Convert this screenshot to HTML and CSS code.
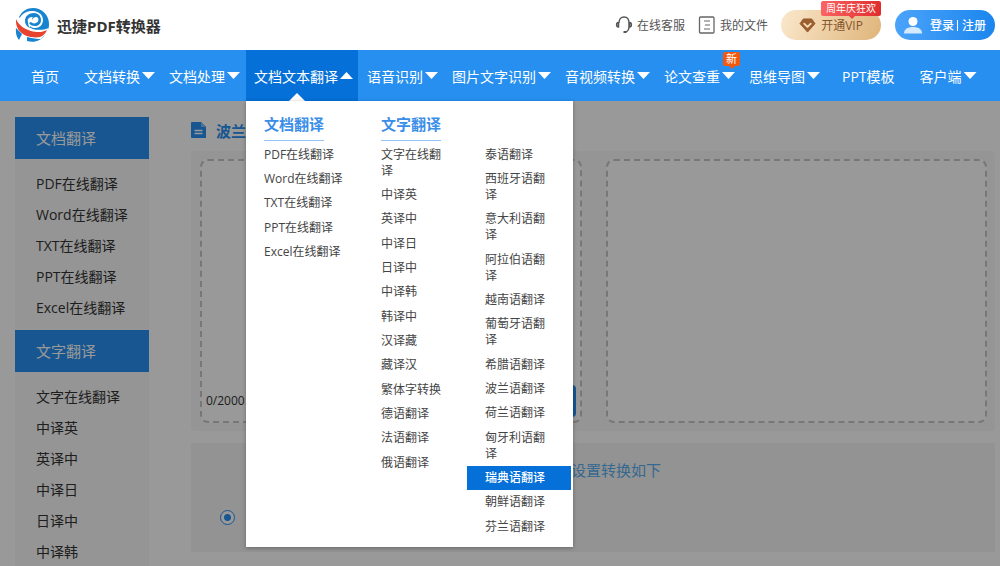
FILE: index.html
```html
<!DOCTYPE html>
<html lang="zh-CN">
<head>
<meta charset="utf-8">
<title>迅捷PDF转换器</title>
<link rel="stylesheet" href="styles.css">
</head>
<body>
<div class="app">
  <header class="topbar">
    <a class="brand" href="#">
      <svg class="brand-logo" viewBox="0 0 34 34" aria-hidden="true">
        <path fill="#1784cf" d="M4 9C7 3 12 0 18 0c9 0 16 7 16 16 0 3-.5 5-1.500 7C26 26 10 20 4 9z"/>
        <path fill="#1784cf" d="M1 20l6 6-3 6C1.500 29 .5 25 1 20zM12 29c6 1.500 13 .5 18-2-4 6-11 8-18 6z"/>
        <path fill="#fff" d="M4 11C7 5 13 2.500 18 3c6 .5 10 4 10 9s-3.500 8-8 8c-2 0-4-.5-5-2l-1 5C9 21 6 17 4 11z"/>
        <path fill="#1784cf" d="M10 13c0-5 4-8 9-8 4 0 7 3 7 7s-3 6-6 6-5-1-6-3l2-1c1 1 3 2 5 1-4-1-5-4-3-6-4 0-6 2-5 5 0 3 1 5 2 6-3-1-5-4-5-7z"/>
        <path fill="#fff" d="M17 12c1-3 5-4 6-2s0 5-3 5c-2 0-3-1-3-3z"/>
        <path fill="#fff" d="M2 9c3 7 9 10 15 12 6 1.500 12 1 17-1l-2 5-6 6C14 31 2 26 0 12z"/>
        <path fill="#e8432f" d="M1 11c3 7 9 10 15 12 7 2 12 1 16-1-1 3-4 6-7 7C14 31 0 26 1 11z"/>
      </svg>
      <span>迅捷PDF转换器</span>
    </a>
    <div class="tools">
      <a class="tool" href="#">
        <svg class="tool-icon" viewBox="0 0 18 18" fill="none" stroke="#555" aria-hidden="true">
          <path stroke-width="1.300" d="M4 7C4 3 6 1 9 1s5 2 5 6v4c0 3-1 4-3 5"/>
          <path stroke-width="1.500" d="M3.500 6.500C1 6.500 1 11 3.500 11zM14.500 6.500c2.500 0 2.500 4.500 0 4.500z"/>
          <path stroke-width="2" d="M8.500 16h3"/>
        </svg>
        <span>在线客服</span>
      </a>
      <a class="tool" href="#">
        <svg class="tool-icon" viewBox="0 0 18 18" fill="none" stroke="#666" aria-hidden="true">
          <rect x="1.500" y="1" width="14.500" height="16" rx="1" stroke-width="1.300"/>
          <path stroke-width="1.200" d="M6 5h6M7 9h5M6 13h6"/>
        </svg>
        <span>我的文件</span>
      </a>
      <button class="pill vip" type="button">
        <svg class="vip-icon" viewBox="0 0 18 16" aria-hidden="true">
          <path fill="#9a5e30" stroke="#9a5e30" stroke-linejoin="round" d="M4.500 1h9L17 6l-8 9-8-9z"/>
          <path fill="none" stroke="#f3dcb6" stroke-width="2" stroke-linecap="round" stroke-linejoin="round" d="M5.500 6L9 9.500 12.500 6"/>
        </svg>
        <span>开通VIP</span>
        <span class="vip-tag">周年庆狂欢</span>
      </button>
      <button class="pill login" type="button">
        <svg class="login-icon" viewBox="0 0 18 17" aria-hidden="true">
          <circle cx="9" cy="4.500" r="4.500" fill="#fff"/>
          <path fill="#d6eaff" d="M0 16.500C0 12 4 10 9 10s9 2 9 6.500z"/>
        </svg>
        <span>登录</span><span class="login-divider"></span><span>注册</span>
      </button>
    </div>
  </header>

  <nav class="nav">
    <ul class="nav-list">
      <li class="nav-item plain"><a href="#">首页</a></li>
      <li class="nav-item"><a href="#">文档转换<i class="caret"></i></a></li>
      <li class="nav-item"><a href="#">文档处理<i class="caret"></i></a></li>
      <li class="nav-item active">
        <a href="#">文档文本翻译<i class="caret up"></i></a>
        <div class="menu">
          <section class="menu-col wide">
            <h3>文档翻译</h3>
            <ul>
              <li><a href="#">PDF在线翻译</a></li>
              <li><a href="#">Word在线翻译</a></li>
              <li><a href="#">TXT在线翻译</a></li>
              <li><a href="#">PPT在线翻译</a></li>
              <li><a href="#">Excel在线翻译</a></li>
            </ul>
          </section>
          <section class="menu-col">
            <h3>文字翻译</h3>
            <ul>
              <li><a href="#">文字在线翻译</a></li>
              <li><a href="#">中译英</a></li>
              <li><a href="#">英译中</a></li>
              <li><a href="#">中译日</a></li>
              <li><a href="#">日译中</a></li>
              <li><a href="#">中译韩</a></li>
              <li><a href="#">韩译中</a></li>
              <li><a href="#">汉译藏</a></li>
              <li><a href="#">藏译汉</a></li>
              <li><a href="#">繁体字转换</a></li>
              <li><a href="#">德语翻译</a></li>
              <li><a href="#">法语翻译</a></li>
              <li><a href="#">俄语翻译</a></li>
            </ul>
          </section>
          <section class="menu-col untitled">
            <ul>
              <li><a href="#">泰语翻译</a></li>
              <li><a href="#">西班牙语翻译</a></li>
              <li><a href="#">意大利语翻译</a></li>
              <li><a href="#">阿拉伯语翻译</a></li>
              <li><a href="#">越南语翻译</a></li>
              <li><a href="#">葡萄牙语翻译</a></li>
              <li><a href="#">希腊语翻译</a></li>
              <li><a href="#">波兰语翻译</a></li>
              <li><a href="#">荷兰语翻译</a></li>
              <li><a href="#">匈牙利语翻译</a></li>
              <li class="current"><a href="#">瑞典语翻译</a></li>
              <li><a href="#">朝鲜语翻译</a></li>
              <li><a href="#">芬兰语翻译</a></li>
            </ul>
          </section>
        </div>
      </li>
      <li class="nav-item"><a href="#">语音识别<i class="caret"></i></a></li>
      <li class="nav-item"><a href="#">图片文字识别<i class="caret"></i></a></li>
      <li class="nav-item"><a href="#">音视频转换<i class="caret"></i></a></li>
      <li class="nav-item"><a href="#">论文查重<i class="caret"></i></a><span class="new-tag">新</span></li>
      <li class="nav-item"><a href="#">思维导图<i class="caret"></i></a></li>
      <li class="nav-item plain"><a href="#">PPT模板</a></li>
      <li class="nav-item"><a href="#">客户端<i class="caret"></i></a></li>
    </ul>
  </nav>

  <div class="page">
    <aside class="sidebar">
      <h2>文档翻译</h2>
      <ul>
        <li><a href="#">PDF在线翻译</a></li>
        <li><a href="#">Word在线翻译</a></li>
        <li><a href="#">TXT在线翻译</a></li>
        <li><a href="#">PPT在线翻译</a></li>
        <li><a href="#">Excel在线翻译</a></li>
      </ul>
      <h2>文字翻译</h2>
      <ul>
        <li><a href="#">文字在线翻译</a></li>
        <li><a href="#">中译英</a></li>
        <li><a href="#">英译中</a></li>
        <li><a href="#">中译日</a></li>
        <li><a href="#">日译中</a></li>
        <li><a href="#">中译韩</a></li>
      </ul>
    </aside>
    <main class="content">
      <h1 class="title">
        <svg class="title-icon" viewBox="0 0 15 16" aria-hidden="true">
          <path fill="#278ff0" d="M1 0h9l5 5v11H1a1 1 0 0 1-1-1V1a1 1 0 0 1 1-1z"/>
          <path stroke="#fff" stroke-width="1.500" d="M3.500 8.500h8M3.500 11.500h8"/>
          <path fill="#7fbaf5" d="M10 0l5 5h-5z"/>
        </svg>
        <span>波兰</span>
      </h1>
      <div class="editor">
        <div class="pane">
          <span class="count">0/2000</span>
          <button class="submit" type="button" aria-label="翻译"></button>
        </div>
        <div class="pane"></div>
      </div>
      <div class="settings">
        <p>设置转换如下</p>
        <input type="radio" name="mode" aria-label="转换方式" checked>
      </div>
    </main>
    <div class="mask"></div>
  </div>
</div>
</body>
</html>
```
FILE: styles.css
```css
* {
  box-sizing: border-box;
}

body,
h1,
h2,
h3,
p,
ul {
  margin: 0;
  padding: 0;
}

ul {
  list-style: none;
}

a {
  color: inherit;
  text-decoration: none;
}

body,
button {
  font-family: "Open Sans", "Noto Sans CJK SC", sans-serif;
}

body {
  color: #333;
  background: #fff;
}

.app {
  display: flex;
  flex-direction: column;
  height: 100vh;
  overflow: hidden;
}

/* Top bar */
.topbar {
  display: flex;
  flex: none;
  align-items: center;
  justify-content: space-between;
  height: 50px;
  padding: 0 5px 0 15px;
}

.brand {
  display: flex;
  align-items: center;
  gap: 8px;
  font-size: 15px;
  font-weight: 700;
}

.brand-logo {
  width: 34px;
  height: 34px;
}

.tools {
  display: flex;
  align-items: center;
  font-size: 12px;
}

.tool {
  display: flex;
  align-items: center;
  gap: 4px;
  margin-right: 13px;
  color: #555;
}

.tool-icon {
  width: 18px;
  height: 18px;
}

.pill {
  position: relative;
  display: flex;
  align-items: center;
  justify-content: center;
  width: 100px;
  height: 30px;
  padding: 0;
  border: 0;
  border-radius: 15px;
  font-size: 12px;
}

.vip {
  gap: 5px;
  margin-right: 14px;
  color: #85562c;
  background: linear-gradient(110deg, #fae8cc, #dfb47a);
}

.vip-icon {
  width: 17px;
  height: 15px;
}

.vip-tag {
  position: absolute;
  top: -9px;
  right: 0;
  padding: 0 5px;
  border-radius: 2px;
  color: #fff;
  background: linear-gradient(90deg, #fb6463, #e02d2e);
  font-size: 10px;
  line-height: 15px;
}

.vip-tag::after {
  position: absolute;
  top: 15px;
  left: 28px;
  border: 3px solid transparent;
  border-top-color: #e94546;
  border-bottom: 0;
  content: "";
}

.login {
  color: #fff;
  background: linear-gradient(90deg, #4ba3fa, #1b86ee);
  font-weight: 500;
}

.login-icon {
  width: 18px;
  height: 17px;
  margin-right: 8px;
}

.login-divider {
  width: 1px;
  height: 11px;
  margin: 0 4px 0 3px;
  background: #fff;
}

/* Navigation */
.nav {
  flex: none;
  padding-left: 15px;
  color: #fff;
  background: #278ff0;
  font-size: 14px;
}

.nav-list {
  display: flex;
  gap: 1px;
}

.nav-item {
  position: relative;
  white-space: nowrap;
}

.nav-item > a {
  display: flex;
  align-items: center;
  gap: 2px;
  height: 51px;
  padding: 0 5px 0 8px;
}

.nav-item.plain > a {
  padding: 0 16px;
}

.nav-item.active {
  background: #0570d8;
}

.nav-item.active::after {
  position: absolute;
  bottom: 0;
  left: 43px;
  border: 8px solid transparent;
  border-top: 0;
  border-bottom-color: #fff;
  content: "";
}

.caret {
  width: 13px;
  height: 7px;
  background: #fff;
  clip-path: polygon(0 0, 100% 0, 50% 100%);
}

.caret.up {
  clip-path: polygon(0 100%, 100% 100%, 50% 0);
}

.new-tag {
  position: absolute;
  top: 2px;
  right: 0;
  padding: 0 3px;
  border-radius: 2px;
  background: #f2590f;
  font-size: 11px;
  line-height: 14px;
}

.new-tag::after {
  position: absolute;
  top: 14px;
  left: 6px;
  border: 3px solid transparent;
  border-top-color: #f2590f;
  border-bottom: 0;
  content: "";
}

/* Drop-down menu */
.menu {
  position: absolute;
  z-index: 2;
  top: 100%;
  left: 0;
  display: flex;
  padding: 11px 2px 8px 0;
  color: #444;
  background: #fff;
  box-shadow: 0 1px 4px rgba(0, 0, 0, 0.3);
  font-size: 12px;
  line-height: 16px;
  white-space: normal;
}

.menu-col {
  width: 104px;
}

.menu-col.wide {
  width: 117px;
}

.menu-col.untitled {
  padding-top: 31px;
}

.menu h3 {
  width: max-content;
  margin: 0 0 2px 18px;
  padding-bottom: 4px;
  border-bottom: 1px solid #93c4f5;
  color: #3a8ee8;
  font-size: 15px;
  line-height: 24px;
}

.menu li {
  padding: 4px 20px 4px 18px;
}

.menu li:nth-child(3n) {
  padding-bottom: 5px;
}

.menu li a {
  display: block;
}

.menu-col:not(.wide) li {
  padding-right: 25px;
}

.menu .current {
  color: #fff;
  background: #0570d8;
  font-weight: 500;
}

/* Page body */
.page {
  position: relative;
  display: flex;
  flex: 1;
  gap: 42px;
  min-height: 0;
  padding: 16px 5px 0 15px;
  overflow: hidden;
}

.mask {
  position: absolute;
  inset: 0;
  background: rgba(0, 0, 0, 0.4);
}

.sidebar {
  flex: none;
  width: 134px;
  background: #f8f8f8;
  font-size: 14px;
}

.sidebar h2 {
  padding-left: 21px;
  color: #fff;
  background: #278ff0;
  font-size: 15px;
  font-weight: 400;
  line-height: 42px;
}

.sidebar ul {
  padding: 9px 0 7px 21px;
}

.sidebar li {
  line-height: 31px;
}

.content {
  flex: 1;
  min-width: 0;
}

.title {
  display: flex;
  align-items: center;
  gap: 10px;
  height: 34px;
  padding-bottom: 8px;
  color: #278ff0;
  font-size: 15px;
}

.title-icon {
  width: 15px;
  height: 16px;
}

.editor {
  display: flex;
  gap: 24px;
  padding: 8px 8px 8px 9px;
  border-radius: 4px;
  background: #f9f9f9;
}

.pane {
  display: flex;
  flex: 1;
  align-items: flex-end;
  justify-content: space-between;
  height: 264px;
  padding: 4px;
  border: 2px dashed #c6c6c6;
  border-radius: 8px;
  background: #fff;
}

.count {
  font-size: 12px;
  line-height: 32px;
}

.submit {
  width: 90px;
  height: 32px;
  border: 0;
  border-radius: 4px;
  background: #278ff0;
}

.settings {
  height: 109px;
  margin-top: 12px;
  padding-top: 15px;
  background: #f5f5f5;
}

.settings p {
  padding-left: 46px;
  color: #5aaff0;
  font-size: 15px;
  line-height: 24px;
  text-align: center;
}

.settings input {
  display: block;
  width: 15px;
  height: 15px;
  margin: 28px 0 0 29px;
  border: 1px solid #278ff0;
  border-radius: 50%;
  background: radial-gradient(circle, #278ff0 3px, #fff 4px);
  appearance: none;
}
```
